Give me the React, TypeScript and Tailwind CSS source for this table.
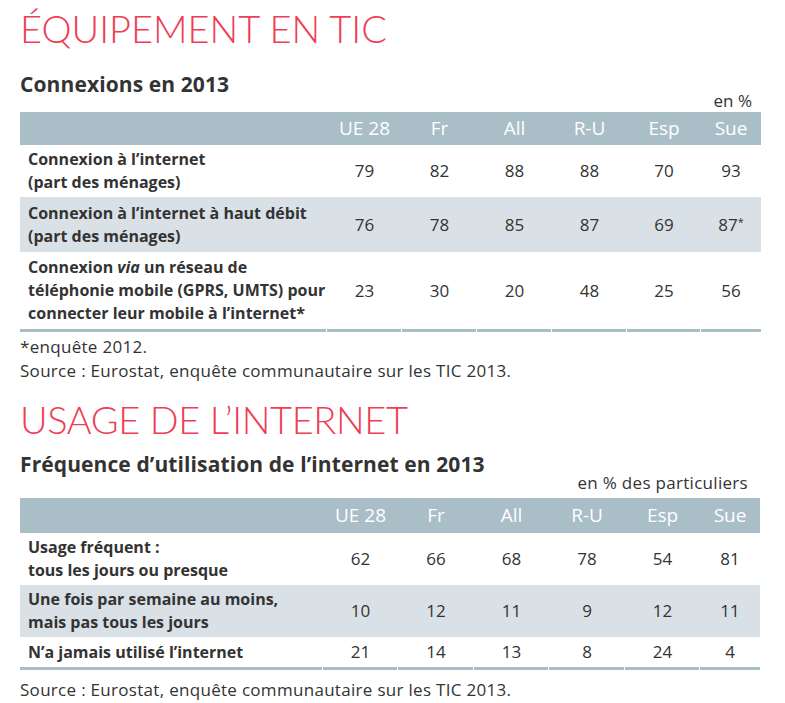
const body = "font-['Open_Sans','Noto_Sans',sans-serif]";
const title = "font-['Lato','Noto_Sans',sans-serif]";

type Row = { label: React.ReactNode; values: React.ReactNode[]; h: string; shaded?: boolean };

const cols = ['UE 28', 'Fr', 'All', 'R-U', 'Esp', 'Sue'];

const connexions: Row[] = [
  {
    label: (
      <>
        Connexion à l’internet
        <br />
        (part des ménages)
      </>
    ),
    values: ['79', '82', '88', '88', '70', '93'],
    h: 'h-[52px]',
  },
  {
    label: (
      <>
        Connexion à l’internet à haut débit
        <br />
        (part des ménages)
      </>
    ),
    values: [
      '76',
      '78',
      '85',
      '87',
      '69',
      <span key="s">
        87<span className="relative -top-[5px] text-[11px]">*</span>
      </span>,
    ],
    h: 'h-[55px]',
    shaded: true,
  },
  {
    label: (
      <>
        Connexion <i>via</i> un réseau de
        <br />
        téléphonie mobile (GPRS, UMTS) pour
        <br />
        connecter leur mobile à l’internet*
      </>
    ),
    values: ['23', '30', '20', '48', '25', '56'],
    h: 'h-[77px]',
  },
];

const usage: Row[] = [
  {
    label: (
      <>
        Usage fréquent :
        <br />
        tous les jours ou presque
      </>
    ),
    values: ['62', '66', '68', '78', '54', '81'],
    h: 'h-[52px]',
  },
  {
    label: (
      <>
        Une fois par semaine au moins,
        <br />
        mais pas tous les jours
      </>
    ),
    values: ['10', '12', '11', '9', '12', '11'],
    h: 'h-[52px]',
    shaded: true,
  },
  {
    label: <>N’a jamais utilisé l’internet</>,
    values: ['21', '14', '13', '8', '24', '4'],
    h: 'h-[30px]',
  },
];

function Table({ rows, grid, headH }: { rows: Row[]; grid: string; headH: string }) {
  return (
    <div>
      <div className={`grid ${grid} ${headH} items-center bg-[#a9bec7] text-[19px] text-white`}>
        <div />
        {cols.map((c) => (
          <div key={c} className="text-center">
            {c}
          </div>
        ))}
      </div>
      {rows.map((r, i) => (
        <div
          key={i}
          className={`grid ${grid} ${r.h} items-center ${r.shaded ? 'bg-[#d9e1e6]' : 'bg-white'}`}
        >
          <div className="whitespace-nowrap pl-2 text-[16px] font-bold leading-[23px] text-[#333]">
            {r.label}
          </div>
          {r.values.map((v, j) => (
            <div key={j} className="text-center text-[17px] text-[#333]">
              {v}
            </div>
          ))}
        </div>
      ))}
      <div className={`grid ${grid}`}>
        {Array.from({ length: 7 }).map((_, i) => (
          <div key={i} className="mr-px h-[3px] bg-[#a9bec7] last:mr-0" />
        ))}
      </div>
    </div>
  );
}

export default function App() {
  return (
    <div className={`${body} min-h-[703px] w-[785px] bg-white px-5 text-[#333]`}>
      <h1 className={`${title} pt-[6px] text-[38px] font-light leading-[44px] text-[#ee3e54]`}>
        ÉQUIPEMENT EN TIC
      </h1>
      <h2 className="mt-[23px] text-[21px] font-bold leading-[22px] tracking-[0.1px] text-[#333]">
        Connexions en 2013
      </h2>
      <div className="w-[741px] pr-[9px] text-right text-[17px] leading-[12px]">en %</div>
      <div className="mt-[5px] w-[741px]">
        <Table
          rows={connexions}
          grid="grid-cols-[307px_75px_75px_75px_75px_74px_60px]"
          headH="h-[33px]"
        />
      </div>
      <div className="mt-[3px] text-[17px] leading-[24px] tracking-[0.3px]">
        <p>*enquête 2012.</p>
        <p>Source : Eurostat, enquête communautaire sur les TIC 2013.</p>
      </div>

      <h1 className={`${title} mt-[14px] text-[38px] font-light leading-[44px] tracking-[-0.4px] text-[#ee3e54]`}>
        USAGE DE L’INTERNET
      </h1>
      <h2 className="mt-[12px] text-[21px] font-bold leading-[22px] tracking-[0.1px] text-[#333]">
        Fréquence d’utilisation de l’internet en 2013
      </h2>
      <div className="mt-[2px] w-[740px] pr-[12px] text-right text-[17px] leading-[12px] tracking-[0.3px]">
        en % des particuliers
      </div>
      <div className="mt-[9px] w-[740px]">
        <Table
          rows={usage}
          grid="grid-cols-[303px_75px_76px_75px_76px_75px_60px]"
          headH="h-[35px]"
        />
      </div>
      <p className="mt-[8px] text-[17px] leading-[24px] tracking-[0.3px]">
        Source : Eurostat, enquête communautaire sur les TIC 2013.
      </p>
    </div>
  );
}
